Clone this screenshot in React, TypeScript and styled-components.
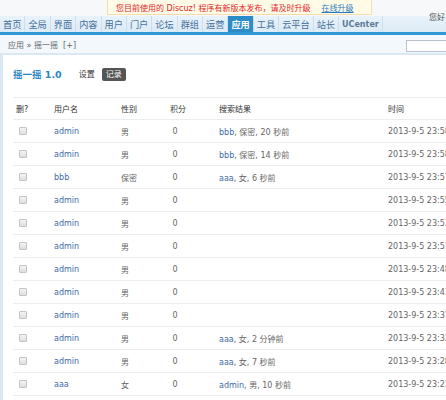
import styled, { createGlobalStyle } from "styled-components";

const GlobalStyle = createGlobalStyle`
  html, body {
    margin: 0;
    padding: 0;
    background: #fff;
    overflow: hidden;
  }
  body {
    font-family: "DejaVu Sans", "Noto Sans CJK SC", sans-serif;
    font-size: 8px;
    color: #555;
  }
`;

const navItems = [
  "首页",
  "全局",
  "界面",
  "内容",
  "用户",
  "门户",
  "论坛",
  "群组",
  "运营",
  "应用",
  "工具",
  "云平台",
  "站长",
];

type Row = {
  user: string;
  gender: string;
  hit?: { name: string; rest: string };
  time: string;
};

const rows: Row[] = [
  { user: "admin", gender: "男", hit: { name: "bbb", rest: ", 保密, 20 秒前" }, time: "2013-9-5 23:58:41" },
  { user: "admin", gender: "男", hit: { name: "bbb", rest: ", 保密, 14 秒前" }, time: "2013-9-5 23:58:27" },
  { user: "bbb", gender: "保密", hit: { name: "aaa", rest: ", 女, 6 秒前" }, time: "2013-9-5 23:57:13" },
  { user: "admin", gender: "男", time: "2013-9-5 23:55:02" },
  { user: "admin", gender: "男", time: "2013-9-5 23:53:45" },
  { user: "admin", gender: "男", time: "2013-9-5 23:51:10" },
  { user: "admin", gender: "男", time: "2013-9-5 23:48:36" },
  { user: "admin", gender: "男", time: "2013-9-5 23:41:19" },
  { user: "admin", gender: "男", time: "2013-9-5 23:37:52" },
  { user: "admin", gender: "男", hit: { name: "aaa", rest: ", 女, 2 分钟前" }, time: "2013-9-5 23:33:08" },
  { user: "admin", gender: "男", hit: { name: "aaa", rest: ", 女, 7 秒前" }, time: "2013-9-5 23:28:44" },
  { user: "aaa", gender: "女", hit: { name: "admin", rest: ", 男, 10 秒前" }, time: "2013-9-5 23:21:30" },
];

export default function App() {
  return (
    <Page>
      <GlobalStyle />
      <TopBar>
        <Notice>
          <span>您目前使用的 Discuz! 程序有新版本发布，请及时升级</span>
          <NoticeLink href="#">在线升级</NoticeLink>
        </Notice>
      </TopBar>
      <NavRow>
        <Nav>
          {navItems.map((item) => (
            <NavItem key={item} $active={item === "应用"}>
              {item}
            </NavItem>
          ))}
          <NavItem $brand>UCenter</NavItem>
        </Nav>
        <Greeting>您好，admin [退出]</Greeting>
      </NavRow>
      <BlueLine />
      <Crumbs>
        <span>应用 » 摇一摇 &nbsp;[+]</span>
        <Search type="text" />
      </Crumbs>
      <Main>
        <TitleRow>
          <Title>
            摇一摇 <b>1.0</b>
          </Title>
          <Tab>设置</Tab>
          <Tab $current>记录</Tab>
        </TitleRow>
        <Table>
          <colgroup>
            <col style={{ width: 38 }} />
            <col style={{ width: 67 }} />
            <col style={{ width: 49 }} />
            <col style={{ width: 49 }} />
            <col style={{ width: 169 }} />
            <col />
          </colgroup>
          <thead>
            <tr>
              <Th>删?</Th>
              <Th>用户名</Th>
              <Th>性别</Th>
              <Th>积分</Th>
              <Th>搜索结果</Th>
              <Th>时间</Th>
            </tr>
          </thead>
          <tbody>
            {rows.map((r, i) => (
              <tr key={i}>
                <Td>
                  <Check type="checkbox" />
                </Td>
                <Td>
                  <UserLink href="#">{r.user}</UserLink>
                </Td>
                <Td>{r.gender}</Td>
                <Td>&nbsp;0</Td>
                <Td>
                  {r.hit && (
                    <>
                      <UserLink href="#">{r.hit.name}</UserLink>
                      {r.hit.rest}
                    </>
                  )}
                </Td>
                <Td>{r.time}</Td>
              </tr>
            ))}
          </tbody>
        </Table>
      </Main>
    </Page>
  );
}

const Page = styled.div`
  width: 446px;
  height: 400px;
  overflow: hidden;
  background: #fff;
`;

const TopBar = styled.div`
  height: 16px;
  background: #f6f8fa;
  padding-left: 107px;
  display: flex;
`;

const Notice = styled.div`
  width: 265px;
  height: 15px;
  box-sizing: border-box;
  padding-left: 8px;
  display: flex;
  align-items: center;
  gap: 11px;
  background: #fffbe6;
  border: 1px solid #f3dcae;
  border-top: none;
  color: #e4262c;
  font-size: 8px;
  white-space: nowrap;
`;

const NoticeLink = styled.a`
  color: #2a7bc0;
  text-decoration: underline;
`;

const NavRow = styled.div`
  display: flex;
  height: 16px;
  background: linear-gradient(#e9f3fa, #dcebf6);
`;

const Nav = styled.div`
  flex: none;
  width: 429px;
  display: flex;
`;

const NavItem = styled.span<{ $active?: boolean; $brand?: boolean }>`
  display: flex;
  align-items: center;
  padding: 0 3px;
  border-right: 1px solid #cddfec;
  font-size: ${(p) => (p.$brand ? "8px" : "9.2px")};
  font-weight: ${(p) => (p.$brand || p.$active ? "bold" : "normal")};
  color: ${(p) => (p.$active ? "#fff" : p.$brand ? "#5a7a98" : "#44709b")};
  background: ${(p) => (p.$active ? "#2d8bc8" : "transparent")};
  white-space: nowrap;
`;

const Greeting = styled.span`
  flex: none;
  font-size: 8px;
  color: #555;
  white-space: nowrap;
  line-height: 8px;
  margin-top: -2px;
`;

const BlueLine = styled.div`
  height: 3px;
  background: #2f97d3;
`;

const Crumbs = styled.div`
  height: 20px;
  box-sizing: border-box;
  display: grid;
  grid-template-columns: 406px 60px;
  align-items: center;
  padding-left: 8px;
  background: #f3f8fc;
  border-bottom: 2px solid #d9e8f3;
  color: #666;
  font-size: 8px;
  white-space: nowrap;
`;

const Search = styled.input`
  margin: 3px 0 0 -8px;
  width: 56px;
  height: 12px;
  box-sizing: border-box;
  border: 1px solid #b9c2ca;
  background: #fff;
  padding: 0;
`;

const Main = styled.div`
  border-left: 3px solid #d9e8f3;
  padding: 12px 0 0 10px;
  height: 343px;
`;

const TitleRow = styled.div`
  height: 14px;
  display: flex;
  align-items: center;
  margin-bottom: 16px;
`;

const Title = styled.h3`
  margin: 0 17px 0 0;
  font-size: 9.5px;
  font-weight: bold;
  color: #2a86c3;
  white-space: nowrap;
`;

const Tab = styled.span<{ $current?: boolean }>`
  font-size: 8px;
  line-height: 13px;
  padding: 0 4px;
  margin-right: ${(p) => (p.$current ? "0" : "3px")};
  margin-left: ${(p) => (p.$current ? "0" : "-4px")};
  border-radius: 2px;
  color: ${(p) => (p.$current ? "#fff" : "#333")};
  background: ${(p) => (p.$current ? "#555" : "transparent")};
`;

const Table = styled.table`
  width: 433px;
  table-layout: fixed;
  border-collapse: collapse;
  font-size: 8px;
  tr {
    border-top: 1px solid #ebeef0;
  }
  tbody tr:last-child {
    border-bottom: 1px solid #ebeef0;
  }
`;

const Th = styled.th`
  height: 21px;
  padding: 0 0 0 3px;
  text-align: left;
  font-weight: normal;
  color: #333;
  white-space: nowrap;
`;

const Td = styled.td`
  height: 22px;
  padding: 0 0 0 3px;
  color: #666;
  white-space: nowrap;
  vertical-align: middle;
`;

const UserLink = styled.a`
  color: #3e69a8;
  text-decoration: none;
`;

const Check = styled.input`
  appearance: none;
  display: block;
  margin: 0 0 0 3px;
  width: 8px;
  height: 8px;
  border: 1px solid #c4c4c4;
  border-radius: 1px;
  background: linear-gradient(#f4f4f4, #dedede);
`;
